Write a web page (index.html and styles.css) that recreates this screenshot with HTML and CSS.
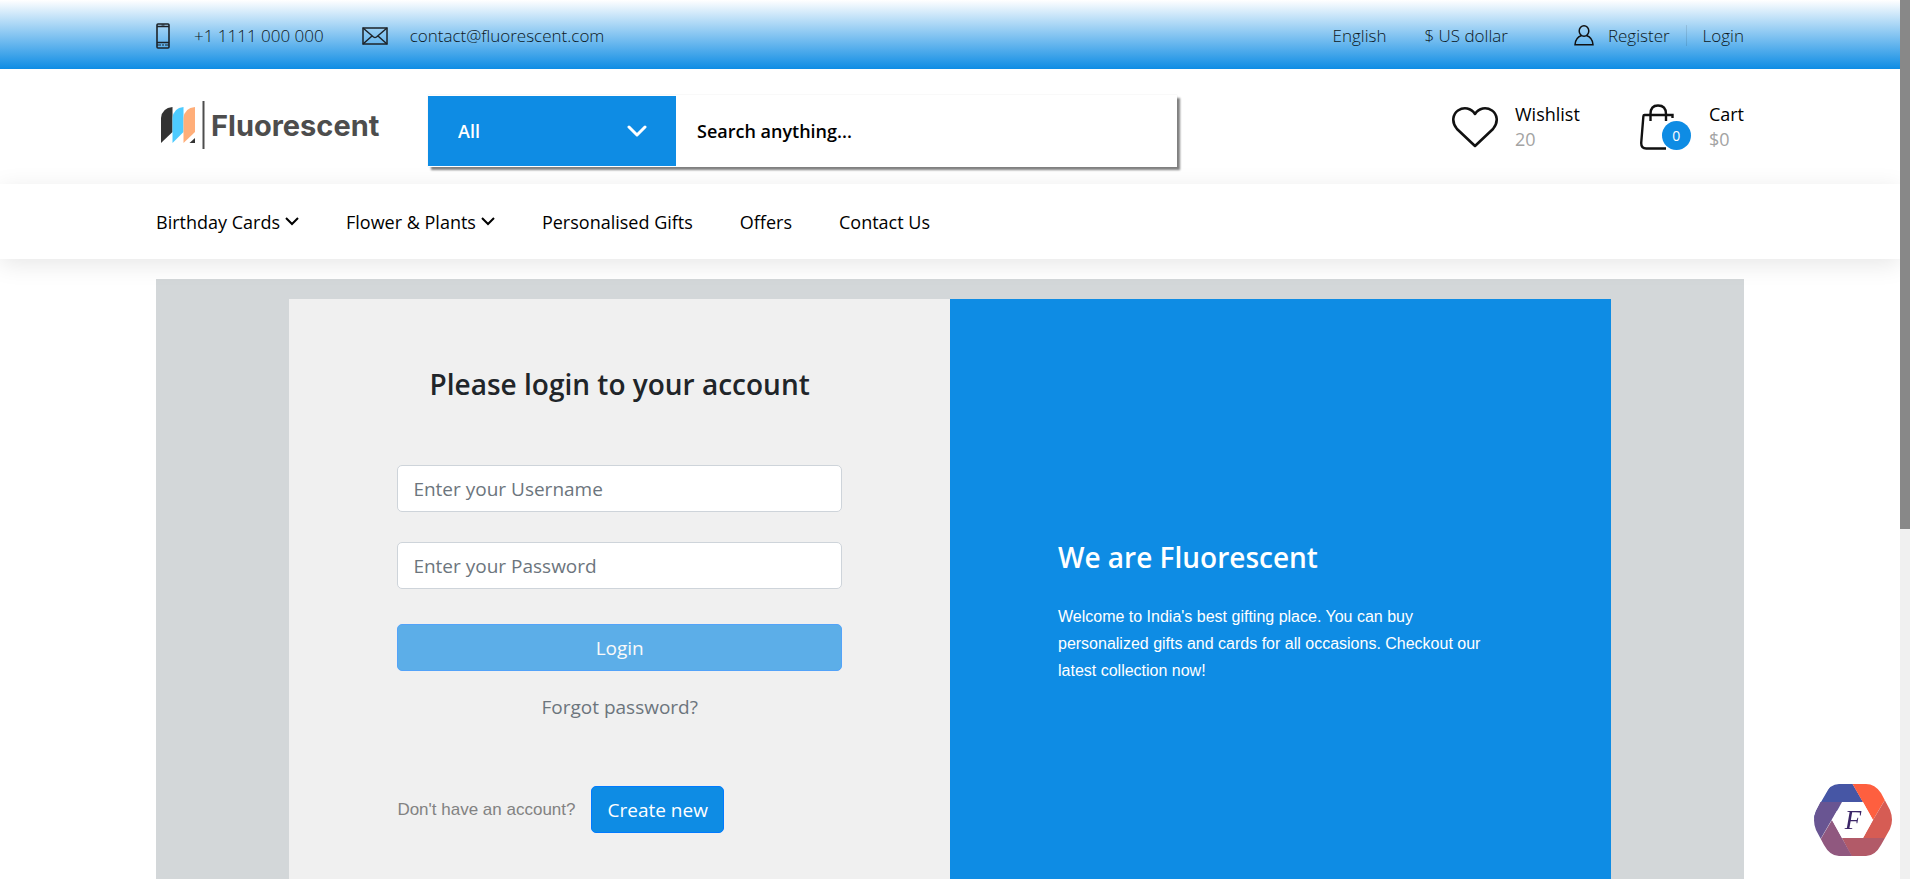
FILE: index.html
```html
<!DOCTYPE html>
<html lang="en">
<head>
<meta charset="utf-8">
<title>Fluorescent - Login</title>
<link rel="stylesheet" href="styles.css">
</head>
<body>
<div class="page">
  <header>
    <div class="topbar container">
      <div class="contact">
        <svg class="phone-icon" width="14" height="26" viewBox="0 0 14 26" fill="none" stroke="#1d2329"><rect x="1" y="1" width="12" height="24" rx="1" stroke-width="1.6"/><path d="M1 3.5h12M1 19.5h12" stroke-width="1.6"/><path d="M5.5 2h3M1 22h4m4 0h4M6 22h2" stroke-width="1"/></svg>
        <a href="#">+1 1111 000 000</a>
      </div>
      <div class="contact">
        <svg width="26" height="18" viewBox="0 0 26 18" fill="none" stroke="#1d2329" stroke-width="1.5"><rect x="1" y="1" width="24" height="16"/><path d="M1 1l10.500 9q1.500 1 3 0L25 1M1 17l9-8M25 17l-9-8"/></svg>
        <a href="#">contact@fluorescent.com</a>
      </div>
      <nav class="account" aria-label="Account">
        <a class="language" href="#">English</a>
        <a class="currency" href="#">$ US dollar</a>
        <svg width="20" height="21" viewBox="0 0 20 21" fill="none" stroke="#111" stroke-width="1.500"><ellipse cx="10" cy="6" rx="4.800" ry="5.200"/><path d="M7.500 10.500C3.500 12 1.200 15 1 19.800h18C18.800 15 16.500 12 12.500 10.500"/></svg>
        <a class="register" href="#">Register</a>
        <a class="signin" href="#">Login</a>
      </nav>
    </div>

    <div class="masthead container">
      <a class="logo" href="#">
        <svg width="45" height="50" viewBox="0 0 45 50"><path d="M1 43V18Q2 8 12.500 7v25z" fill="#333"/><path d="M12.500 43V18q1-10 11-11v25z" fill="#4dcbff"/><path d="M23.500 43V18q1-10 11.500-11v25z" fill="#ffae79"/><path d="M29.500 43l5.500-5v5z" fill="#333"/><path d="M43.500 1v48" stroke="#4d4d4d" stroke-width="2"/></svg>
        <span>Fluorescent</span>
      </a>
      <form class="search">
        <label class="category">
          <select aria-label="Category"><option>All</option></select>
          <svg width="20" height="12" viewBox="0 0 20 12" fill="none" stroke="#fff" stroke-width="3" stroke-linecap="round" stroke-linejoin="round"><path d="M2 2l8 8 8-8"/></svg>
        </label>
        <input type="search" aria-label="Search" placeholder="Search anything...">
      </form>
      <div class="shortcuts">
        <a class="shortcut" href="#">
          <svg width="46" height="42" viewBox="0 0 46 42" fill="none" stroke="#111" stroke-width="2.600" stroke-linejoin="round"><path d="M23 40L5 23C-1 16 1 8 6 4.500c6-4 13-2.500 17 3.500 4-6 11-7.500 17-3.500C45 8 47 16 41 23z"/></svg>
          <span class="shortcut-text"><span>Wishlist</span><span class="muted">20</span></span>
        </a>
        <a class="shortcut" href="#">
          <span class="bag">
            <svg width="34" height="46" viewBox="0 0 34 46" fill="none" stroke="#111" stroke-width="2.400"><path d="M32.500 14v-3H4.500Q3.500 11 3.400 12L1.200 39q0 5.500 5 5.500H26"/><path d="M10.500 17v-7C10.500 4 13 1.500 18 1.500S26 4 26 10v7"/></svg>
            <span class="badge">0</span>
          </span>
          <span class="shortcut-text"><span>Cart</span><span class="muted">$0</span></span>
        </a>
      </div>
    </div>

    <nav class="mainnav container" aria-label="Main">
      <a href="#">Birthday Cards <svg width="14" height="9" viewBox="0 0 14 9"><path d="M1 1l6 6 6-6"/></svg></a>
      <a href="#">Flower &amp; Plants <svg width="14" height="9" viewBox="0 0 14 9"><path d="M1 1l6 6 6-6"/></svg></a>
      <a href="#">Personalised Gifts</a>
      <a href="#">Offers</a>
      <a href="#">Contact Us</a>
    </nav>
  </header>

  <main class="container">
    <div class="backdrop">
      <div class="card">
        <form class="login">
          <h1>Please login to your account</h1>
          <input type="text" aria-label="Username" placeholder="Enter your Username">
          <input type="password" aria-label="Password" placeholder="Enter your Password">
          <button class="btn" type="submit" disabled>Login</button>
          <a class="forgot" href="#">Forgot password?</a>
          <div class="signup">
            <p>Don't have an account?</p>
            <button class="btn" type="button">Create new</button>
          </div>
        </form>
        <section class="about">
          <h2>We are Fluorescent</h2>
          <p>Welcome to India's best gifting place. You can buy personalized gifts and cards for all occasions. Checkout our latest collection now!</p>
        </section>
      </div>
    </div>
  </main>

  <button class="chat" type="button" aria-label="Chat">
    <svg width="80" height="74" viewBox="0 0 80 74">
      <defs><clipPath id="hex"><path d="M26 1H53Q62 1 68 10L77 27Q81 37 77 46L68 62Q62 73 53 73H26Q17 73 11 62L3 47Q-1 37 3 28L11 12Q17 1 26 1z"/></clipPath></defs>
      <g clip-path="url(#hex)">
        <path d="M-3 37L8 19 19 0h20l11 19z" fill="#4656a5"/>
        <path d="M39 0h43L70 20 60 37z" fill="#fe5f3f"/>
        <path d="M82 0v55H50V55l10-18z" fill="#d65c54"/>
        <path d="M29 55h53v19H39z" fill="#b25a68"/>
        <path d="M19 37l20.500 37H-3z" fill="#90587f"/>
        <path d="M29 19H-3v55z" fill="#695592"/>
      </g>
      <path d="M29 19h21l10 18-10 18H29L19 37z" fill="#fff"/>
      <text class="monogram" x="40" y="46" text-anchor="middle">F</text>
    </svg>
  </button>
</div>
<div class="scrollbar"><div class="thumb"></div></div>
</body>
</html>
```
FILE: styles.css
```css
* { box-sizing: border-box; }

body {
  margin: 0;
  display: grid;
  grid-template-columns: 1fr 10px;
  height: 100vh;
  overflow: hidden;
  font-family: "Open Sans", "Noto Sans", sans-serif;
  background: #fff;
  color: #000;
}

a { color: inherit; text-decoration: none; }
h1, h2, p { margin: 0; }
input, select, button { font: inherit; }
svg { display: block; flex: none; }

.page { height: 100vh; overflow: hidden; }
.container { padding-left: 156px; padding-right: 156px; }

.topbar {
  display: flex;
  align-items: center;
  gap: 38px;
  height: 69px;
  padding-top: 2px;
  font-size: 17px;
  font-weight: 300;
  color: #0c1824;
  background: linear-gradient(to bottom, #fff, #0e8ce4);
}
.contact { display: flex; align-items: center; gap: 22px; }
.contact .phone-icon { margin-right: 2px; }
.account { display: flex; align-items: center; margin-left: auto; }
.currency { margin: 0 66px 0 38px; }
.register { margin-left: 14px; padding-right: 16px; border-right: 1px solid rgba(0, 0, 0, .1); line-height: 21px; }
.signin { padding-left: 16px; }

.masthead {
  display: flex;
  align-items: center;
  height: 115px;
  padding-top: 9px;
}
.logo {
  display: flex;
  align-items: center;
  gap: 6px;
  width: 272px;
  padding: 0 0 12px 4px;
  font-family: Inter, sans-serif;
  font-size: 29px;
  font-weight: 700;
  color: #4d4d4d;
}
.search {
  display: grid;
  grid-template-columns: 248px 1fr;
  width: 749px;
  height: 72px;
  padding: 1px 0;
  background: #fff;
  box-shadow: 3px 3px 2px #808080, 0 0 1px #ddd;
  font-size: 18px;
  font-weight: 600;
}
.category { display: grid; align-items: center; background: #0e8ce4; }
.category select, .category svg { grid-area: 1 / 1; }
.category select {
  height: 100%;
  padding: 0 30px;
  border: 0;
  appearance: none;
  background: none;
  color: #fff;
}
.category svg { justify-self: end; margin-right: 29px; pointer-events: none; }
.search input { padding: 0 21px; border: 0; outline: 0; background: none; }
.search input::placeholder { color: #000; }

.shortcuts {
  display: flex;
  gap: 60px;
  margin-left: auto;
  padding-bottom: 8px;
  font-size: 18px;
  line-height: 25px;
}
.shortcut { display: flex; align-items: center; gap: 17px; }
.shortcut-text { display: flex; flex-direction: column; }
.muted { color: #a3a3a3; }
.bag { position: relative; width: 52px; }
.badge {
  position: absolute;
  left: 22px;
  top: 17px;
  width: 29px;
  height: 29px;
  border-radius: 50%;
  background: #0e8ce4;
  color: #fff;
  font-size: 14px;
  line-height: 29px;
  text-align: center;
}

.mainnav {
  display: flex;
  align-items: center;
  gap: 47px;
  height: 75px;
  background: #fff;
  box-shadow: 0 5px 25px rgba(0, 0, 0, .1);
  font-size: 18px;
}
.mainnav a { display: flex; align-items: center; gap: 5px; }
.mainnav svg { fill: none; stroke: #000; stroke-width: 2; }

.backdrop {
  margin-top: 20px;
  padding: 20px 0;
  background: rgba(33, 53, 66, .2);
}
.card {
  display: grid;
  grid-template-columns: 1fr 1fr;
  width: 83.2%;
  margin: 0 auto;
}
.login, .about { display: flex; flex-direction: column; padding: 0 108px; }
.login { padding-top: 65px; padding-bottom: 90px; background: #f0f0f0; font-size: 19px; }
.login h1 {
  margin-bottom: 61px;
  font-size: 28px;
  font-weight: 600;
  line-height: 40px;
  text-align: center;
  color: #212529;
}
.login input {
  height: 47px;
  margin-bottom: 30px;
  padding: 0 15px;
  border: 1px solid #ced4da;
  border-radius: 5px;
  background: #fff;
}
.login input::placeholder { color: #6c757d; opacity: 1; }
.btn {
  height: 47px;
  padding: 0 15px;
  border: 1px solid #007bff;
  border-radius: 5px;
  background: #0e8ce4;
  color: #fff;
}
.btn:disabled { margin-top: 5px; opacity: .65; }
.forgot { margin: 21px 0 64px; line-height: 30px; text-align: center; color: #6c757d; }
.signup { display: flex; align-items: center; gap: 16px; }
.signup p { font-family: "Liberation Sans", Arial, sans-serif; font-size: 17px; color: #828282; }

.about { justify-content: center; gap: 28px; background: #0e8ce4; color: #fff; }
.about h2 { font-size: 28px; font-weight: 600; line-height: 36px; }
.about p { font-family: "Liberation Sans", Arial, sans-serif; font-size: 16px; line-height: 27px; }

.chat {
  position: fixed;
  right: 17px;
  bottom: 22px;
  padding: 0;
  border: 0;
  background: none;
}
.monogram { font: italic 27px "Liberation Serif", serif; fill: #3b2667; }

.scrollbar { background: #f0f0f0; }
.thumb { height: 60.2%; background: #888; }
```
